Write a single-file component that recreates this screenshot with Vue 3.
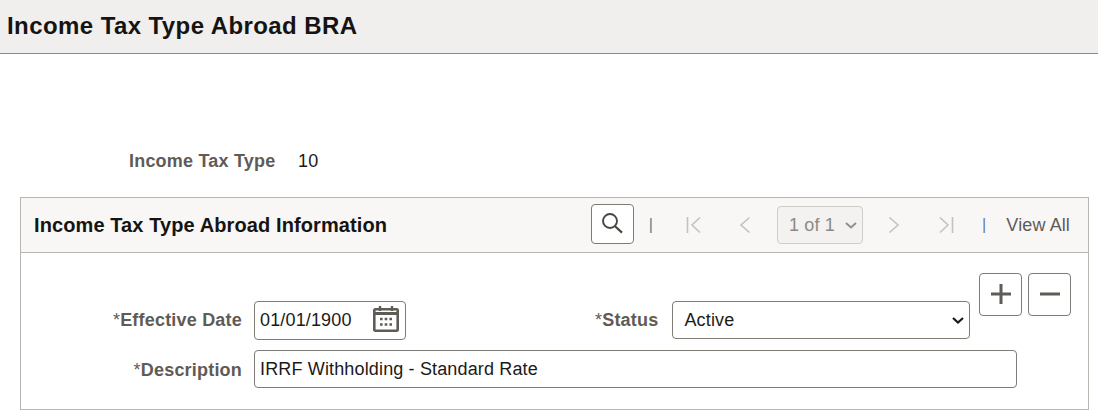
<script setup>
import { ref } from 'vue'

const status = ref('Active')
const effDate = ref('01/01/1900')
const descr = ref('IRRF Withholding - Standard Rate')
</script>

<template>
  <div class="page">
    <header class="title-bar">
      <h1>Income Tax Type Abroad BRA</h1>
    </header>

    <div class="key-row">
      <span class="key-label">Income Tax Type</span>
      <span class="key-value">10</span>
    </div>

    <section class="panel">
      <div class="panel-head">
        <h2>Income Tax Type Abroad Information</h2>
        <div class="nav">
          <button class="search-btn" aria-label="Find">
            <svg width="24" height="24" viewBox="0 0 24 24" fill="none" stroke="#4a4641">
              <circle cx="10" cy="9" r="7" stroke-width="1.9" />
              <path d="M15 14.2L22 20.6" stroke-width="2.2" />
            </svg>
          </button>
          <span class="sep first">|</span>
          <svg class="pager first-i" width="16" height="18" viewBox="0 0 16 18" fill="none" stroke="#c4c2bf" stroke-width="1.6">
            <path d="M1.5 1v16M14 1.5L6 9l8 7.5" />
          </svg>
          <svg class="pager prev-i" width="12" height="18" viewBox="0 0 12 18" fill="none" stroke="#c4c2bf" stroke-width="1.6">
            <path d="M10.5 1.5L2 9l8.5 7.5" />
          </svg>
          <select class="page-sel" disabled>
            <option>1 of 1</option>
          </select>
          <svg class="pager next-i" width="12" height="18" viewBox="0 0 12 18" fill="none" stroke="#c4c2bf" stroke-width="1.6">
            <path d="M1.5 1.5L10 9l-8.5 7.5" />
          </svg>
          <svg class="pager last-i" width="16" height="18" viewBox="0 0 16 18" fill="none" stroke="#c4c2bf" stroke-width="1.6">
            <path d="M14.5 1v16M2 1.5L10 9l-8 7.5" />
          </svg>
          <span class="sep second">|</span>
          <a class="view-all">View All</a>
        </div>
      </div>

      <div class="panel-body">
        <div class="row row-top">
          <label class="lbl"><i>*</i>Effective Date</label>
          <div class="date-box">
            <input v-model="effDate" class="date-input" />
            <svg class="cal" width="26" height="26" viewBox="0 0 26 26" fill="none" stroke="#5f5b57">
              <rect x="1.3" y="3.3" width="23.4" height="21.4" rx="1" stroke-width="2.6" />
              <path d="M1 7.5h24" stroke-width="3" />
              <path d="M7 0v5M19 0v5" stroke-width="2.4" />
              <path d="M7 13h2.6M11.7 13h2.6M16.4 13h2.6M7 18.5h2.6M11.7 18.5h2.6M16.4 18.5h2.6" stroke-width="2.4" />
            </svg>
          </div>
          <label class="lbl status-lbl"><i>*</i>Status</label>
          <select v-model="status" class="status-sel">
            <option>Active</option>
            <option>Inactive</option>
          </select>
          <button class="row-btn add-btn" aria-label="Add row">
            <svg width="24" height="24" viewBox="0 0 24 24" stroke="#5f5b57" stroke-width="3">
              <path d="M12 1v20M2 11h20" />
            </svg>
          </button>
          <button class="row-btn" aria-label="Delete row">
            <svg width="24" height="24" viewBox="0 0 24 24" stroke="#5f5b57" stroke-width="3">
              <path d="M2 11h20" />
            </svg>
          </button>
        </div>
        <div class="row">
          <label class="lbl desc-lbl"><i>*</i>Description</label>
          <input v-model="descr" class="descr-input" />
        </div>
      </div>
    </section>
  </div>
</template>

<style scoped>
.page {
  width: 1098px;
  height: 415px;
  overflow: hidden;
  background: #fff;
  font-family: 'Liberation Sans', Arial, sans-serif;
  font-size: 18px;
  letter-spacing: 0.15px;
  color: #1c1a18;
}
.title-bar {
  height: 53px;
  box-sizing: content-box;
  background: #f0efee;
  border-bottom: 1px solid #8d8a86;
  display: flex;
  align-items: center;
  padding-left: 7px;
}
h1 {
  margin: 0 0 2px;
  font-size: 24px;
  letter-spacing: 0.42px;
  font-weight: 700;
  color: #161412;
}
.key-row {
  display: flex;
  align-items: center;
  height: 22px;
  margin-top: 96px;
  padding-left: 129px;
}
.key-label {
  font-weight: 700;
  color: #5f5b57;
  width: 169px;
  letter-spacing: 0.2px;
}
.key-value {
  color: #1c1a18;
}
.panel {
  margin: 25px 0 0 20px;
  width: 1069px;
  height: 213px;
  box-sizing: border-box;
  border: 1px solid #b9b6b2;
}
.panel-head {
  height: 54px;
  background: #f8f7f6;
  border-bottom: 1px solid #b9b6b2;
  display: flex;
  align-items: center;
  justify-content: space-between;
  padding: 0 18px 0 13px;
}
h2 {
  margin: 0;
  font-size: 20px;
  letter-spacing: 0.1px;
  font-weight: 700;
  color: #161412;
}
.nav {
  display: flex;
  align-items: center;
  color: #5f5b57;
}
.search-btn,
.row-btn {
  width: 43px;
  height: 43px;
  padding: 0;
  background: #fff;
  border: 1px solid #7f7b76;
  border-radius: 4px;
  display: flex;
  align-items: center;
  justify-content: center;
}
.search-btn {
  height: 40px;
  margin-bottom: 2px;
}
.sep {
  color: #5f7f9c;
  font-size: 16px;
}
.sep.first {
  margin-left: 15px;
}
.pager {
  flex: none;
}
.first-i {
  margin-left: 33px;
}
.prev-i {
  margin-left: 37px;
}
.page-sel {
  width: 86px;
  height: 38px;
  margin-left: 26px;
  padding-left: 11px;
  appearance: none;
  background: #f3f2f1 url("data:image/svg+xml,%3Csvg xmlns='http://www.w3.org/2000/svg' width='12' height='7' fill='none' stroke='%23928f8b' stroke-width='2'%3E%3Cpath d='M1 1l5 4.5L11 1'/%3E%3C/svg%3E") no-repeat right 5px center;
  border: 1px solid #cfcdca;
  border-radius: 4px;
  font: inherit;
  letter-spacing: inherit;
  color: #8c8985;
  opacity: 1;
}
.next-i {
  margin-left: 25px;
}
.last-i {
  margin-left: 38px;
}
.sep.second {
  margin-left: 28px;
}
.view-all {
  margin-left: 20px;
  color: #5f5b57;
  letter-spacing: 0.12px;
}
.panel-body {
  padding-top: 20px;
}
.row {
  display: flex;
  align-items: center;
  padding-top: 10px;
}
.row-top {
  align-items: flex-start;
  padding-top: 0;
}
.lbl {
  width: 221px;
  text-align: right;
  font-weight: 700;
  color: #5f5b57;
  flex: none;
  letter-spacing: 0.2px;
}
.lbl i {
  font-style: normal;
  font-weight: 400;
}
.row-top .lbl {
  margin-top: 37px;
}
.desc-lbl {
  padding-top: 2px;
}
.date-box {
  flex: none;
  width: 152px;
  height: 39px;
  box-sizing: border-box;
  margin: 28px 0 0 12px;
  border: 1px solid #7f7b76;
  border-radius: 4px;
  display: flex;
  align-items: center;
  padding-right: 6px;
}
.cal {
  margin-bottom: 3px;
}
.date-input {
  width: 112px;
  flex: 1;
  min-width: 0;
  border: 0;
  outline: 0;
  padding: 0 0 0 5px;
  font: inherit;
  letter-spacing: inherit;
  color: inherit;
  background: transparent;
}
.status-lbl.lbl {
  width: auto;
  margin-left: 189px;
}
.status-sel {
  width: 298px;
  height: 38px;
  margin: 28px 0 0 14px;
  padding-left: 11px;
  appearance: none;
  background: #fff url("data:image/svg+xml,%3Csvg xmlns='http://www.w3.org/2000/svg' width='12' height='7' fill='none' stroke='%231c1a18' stroke-width='2.2'%3E%3Cpath d='M1 1l5 4.5L11 1'/%3E%3C/svg%3E") no-repeat right 5px center;
  border: 1px solid #7f7b76;
  border-radius: 4px;
  font: inherit;
  letter-spacing: inherit;
  color: inherit;
}
.add-btn {
  margin-left: 9px;
  margin-right: 6px;
}
.descr-input {
  width: 763px;
  height: 38px;
  box-sizing: border-box;
  margin-left: 12px;
  padding: 0 5px;
  border: 1px solid #7f7b76;
  border-radius: 4px;
  outline: 0;
  font: inherit;
  letter-spacing: inherit;
  color: inherit;
}
</style>
